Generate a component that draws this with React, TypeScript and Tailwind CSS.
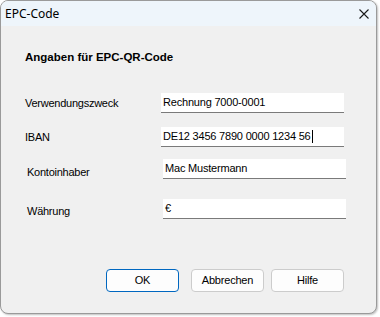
type Field = { label: string; value: string; labelClass: string; rowClass: string; caret?: boolean };

const fields: Field[] = [
  { label: "Verwendungszweck", value: "Rechnung 7000-0001", labelClass: "", rowClass: "mt-[29px]" },
  { label: "IBAN", value: "DE12 3456 7890 0000 1234 56", labelClass: "", rowClass: "mt-[14px]", caret: true },
  { label: "Kontoinhaber", value: "Mac Mustermann", labelClass: "ml-[2px] mt-[3px]", rowClass: "mt-[12px]" },
  { label: "Währung", value: "€", labelClass: "ml-[2px] mt-[2px]", rowClass: "mt-[20px]" },
];

function Input({ value, caret }: { value: string; caret?: boolean }) {
  return (
    <div className="flex h-[20px] w-[183px] items-center border-b border-[#7a7a7a] bg-white pl-[2px] text-[11px] tracking-[-0.2px] text-black">
      <span>{value}</span>
      {caret && <span className="ml-px h-[13px] w-px bg-black" />}
    </div>
  );
}

function Button({ label, primary }: { label: string; primary?: boolean }) {
  return (
    <button
      className={`flex h-[23px] w-[73px] items-center justify-center rounded-[4px] border bg-[#fdfdfd] text-[11px] tracking-[-0.2px] text-black ${
        primary ? "border-[#0067c0]" : "border-[#cccccc]"
      }`}
    >
      {label}
    </button>
  );
}

export default function App() {
  return (
    <div className="h-[317px] w-[380px] bg-white" style={{ fontFamily: '"Liberation Sans", Arial, sans-serif' }}>
      <div className="flex h-[314px] w-[377px] flex-col overflow-hidden rounded-[8px] border border-[#9a9a9a] bg-[#f0f0f0] shadow-[1px_1px_2px_rgba(0,0,0,0.25)]">
        <div
          className="flex h-[25px] shrink-0 items-center justify-between bg-[#eef5fb] pl-[4px] pr-[7px] text-[12px] text-black"
          style={{ fontFamily: '"Noto Sans", "Open Sans", sans-serif' }}
        >
          <span>EPC-Code</span>
          <svg width="10" height="10" viewBox="0 0 10 10" className="mt-px">
            <path d="M0.5 0.5 L9.5 9.5 M9.5 0.5 L0.5 9.5" stroke="#1a1a1a" strokeWidth="1.1" fill="none" />
          </svg>
        </div>
        <div className="flex flex-col pl-[24px]">
          <h1 className="mt-[24px] text-[11.5px] font-bold leading-[14px] text-black">Angaben für EPC-QR-Code</h1>
          {fields.map((f) => (
            <div key={f.label} className={`flex h-[20px] items-start ${f.rowClass}`}>
              <span className={`w-[136px] text-[11px] leading-[20px] tracking-[-0.25px] text-black ${f.labelClass}`}>
                {f.label}
              </span>
              <Input value={f.value} caret={f.caret} />
            </div>
          ))}
          <div className="mt-[50px] flex pl-[81px]">
            <Button label="OK" primary />
            <div className="ml-[12px]">
              <Button label="Abbrechen" />
            </div>
            <div className="ml-[7px]">
              <Button label="Hilfe" />
            </div>
          </div>
        </div>
      </div>
    </div>
  );
}
